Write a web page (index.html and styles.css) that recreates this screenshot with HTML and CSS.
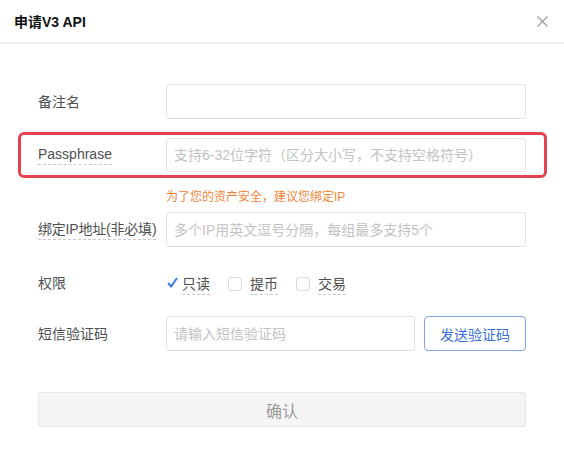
FILE: index.html
```html
<!DOCTYPE html>
<html lang="zh-CN">
<head>
<meta charset="utf-8">
<title>申请V3 API</title>
<link rel="stylesheet" href="styles.css">
</head>
<body>
<div class="modal">
  <div class="modal-header">
    <span class="modal-title">申请V3 API</span>
    <span class="close" aria-label="关闭">
      <svg width="11" height="11" viewBox="0 0 11 11"><path d="M0.5 0.5 L10.5 10.5 M10.5 0.5 L0.5 10.5" stroke="#9a9a9a" stroke-width="1.2" fill="none"/></svg>
    </span>
  </div>
  <div class="modal-body">
    <div class="row row-first">
      <label class="label">备注名</label>
      <input class="input" type="text">
    </div>
    <div class="row row-highlight">
      <label class="label"><span class="dotted">Passphrase</span></label>
      <input class="input" type="text" placeholder="支持6-32位字符（区分大小写，不支持空格符号）">
    </div>
    <div class="hint">为了您的资产安全，建议您绑定IP</div>
    <div class="row row-ip">
      <label class="label"><span class="dotted">绑定IP地址(非必填)</span></label>
      <input class="input" type="text" placeholder="多个IP用英文逗号分隔，每组最多支持5个">
    </div>
    <div class="row row-perm">
      <label class="label">权限</label>
      <div class="perms">
        <span class="perm">
          <svg class="check" width="11" height="11" viewBox="0 0 11 11"><path d="M1.2 5.8 L4 9.6 L10 1" stroke="#3a7be0" stroke-width="2" fill="none" stroke-linejoin="round"/></svg>
          <span class="dotted">只读</span>
        </span>
        <span class="perm">
          <span class="box"></span>
          <span class="dotted">提币</span>
        </span>
        <span class="perm">
          <span class="box"></span>
          <span class="dotted">交易</span>
        </span>
      </div>
    </div>
    <div class="row row-sms">
      <label class="label">短信验证码</label>
      <input class="input input-sms" type="text" placeholder="请输入短信验证码">
      <button class="btn-send" type="button">发送验证码</button>
    </div>
    <div class="row row-submit">
      <button class="btn-confirm" type="button">确认</button>
    </div>
  </div>
</div>
</body>
</html>
```

FILE: styles.css
```css
* { box-sizing: border-box; }
html, body {
  margin: 0;
  padding: 0;
  background: #fff;
}
body {
  font-family: "Liberation Sans", "Noto Sans CJK SC", sans-serif;
  color: #555;
  font-size: 14px;
}
.modal {
  width: 564px;
  height: 451px;
  background: #fff;
}
.modal-header {
  height: 44px;
  border-bottom: 2px solid #f0f0f0;
  display: flex;
  align-items: center;
  justify-content: space-between;
  padding: 0 16px 0 14px;
}
.modal-title {
  font-size: 14px;
  font-weight: bold;
  color: #111;
  margin-top: -1px;
}
.close {
  display: flex;
  width: 11px;
  height: 11px;
}
.modal-body {
  display: flex;
  flex-direction: column;
}
.row {
  display: flex;
  align-items: center;
  padding: 0 38px;
}
.row-first { margin-top: 40px; }
.row-highlight {
  margin: 13px 17px 0 18px;
  padding: 3px 18px 3px 17px;
  border: 3px solid #e5424f;
  border-radius: 6px;
}
.label {
  width: 128px;
  flex: none;
  font-size: 14px;
  line-height: 18px;
  color: #4f4f4f;
}
.row-highlight .label { width: 128px; }
.dotted {
  display: inline-block;
  line-height: 18px;
  padding-bottom: 1px;
  border-bottom: 1px dashed #c8c8c8;
}
.input {
  width: 360px;
  height: 35px;
  border: 1px solid #e2e2e2;
  border-radius: 3px;
  padding: 0 8px 0 7px;
  font-family: inherit;
  font-size: 14px;
  color: #333;
  outline: none;
  background: #fff;
}
.row-highlight .input { height: 34px; }
.input::placeholder { color: #c2c2c2; }
.hint {
  margin-top: 10px;
  padding-left: 166px;
  font-size: 12px;
  line-height: 18px;
  color: #f0853a;
}
.row-ip { margin-top: 6px; }
.row-ip .label .dotted { letter-spacing: -0.2px; }
.row-perm {
  margin-top: 18px;
  height: 35px;
}
.perms {
  display: flex;
  align-items: center;
  gap: 18px;
  padding-top: 2px;
}
.perm {
  display: flex;
  align-items: center;
  gap: 7px;
  color: #4f4f4f;
}
.perm:first-child { gap: 4px; margin-left: 1px; }
.perm .dotted { margin-top: 3px; }
.check { display: block; margin-top: -2px; }
.box {
  width: 14px;
  height: 14px;
  border: 1px solid #dcdcdc;
  border-radius: 3px;
  background: #fff;
  margin-right: 1px;
}
.row-sms { margin-top: 16px; }
.input-sms { width: 249px; }
.btn-send {
  margin-left: 9px;
  width: 102px;
  height: 35px;
  border: 1px solid #7fa3e6;
  border-radius: 4px;
  background: #fff;
  color: #3a6fd8;
  font-family: inherit;
  font-size: 14px;
  padding: 0;
}
.row-submit { margin-top: 41px; }
.btn-confirm {
  width: 488px;
  height: 35px;
  border: 1px solid #e6e6e6;
  border-radius: 3px;
  background: #f5f5f5;
  color: #9a9a9a;
  font-family: inherit;
  font-size: 16px;
  padding: 0;
}
```
